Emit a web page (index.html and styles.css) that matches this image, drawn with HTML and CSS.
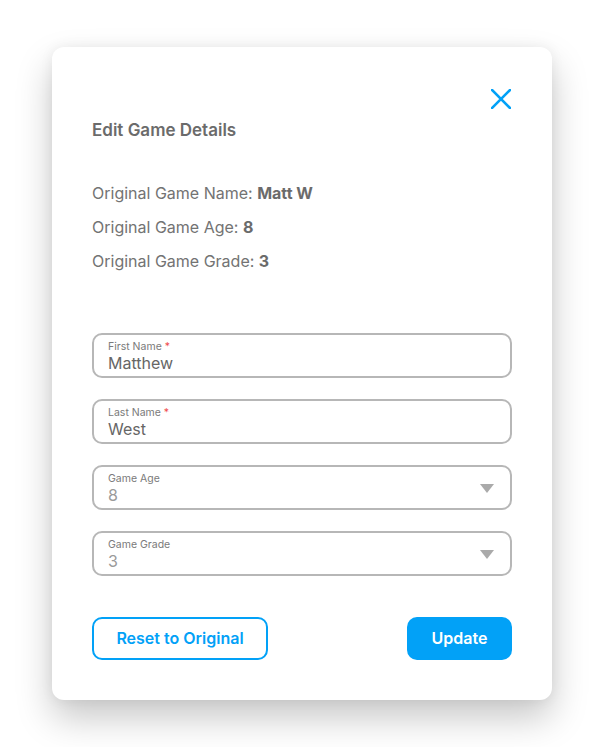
FILE: index.html
```html
<!DOCTYPE html>
<html lang="en">
<head>
<meta charset="utf-8">
<title>Edit Game Details</title>
<link rel="stylesheet" href="styles.css">
</head>
<body>
<div class="card">
  <div class="card-top">
    <button class="close" aria-label="Close">
      <svg width="20" height="20" viewBox="0 0 20 20"><path d="M1 1 L19 19 M19 1 L1 19" stroke="#02a1f7" stroke-width="2.6" stroke-linecap="square" fill="none"/></svg>
    </button>
  </div>
  <h2 class="title">Edit Game Details</h2>
  <div class="originals">
    <p>Original Game Name: <b>Matt W</b></p>
    <p>Original Game Age: <b>8</b></p>
    <p>Original Game Grade: <b>3</b></p>
  </div>
  <div class="fields">
    <div class="field">
      <span class="label">First Name <span class="req">*</span></span>
      <span class="value">Matthew</span>
    </div>
    <div class="field">
      <span class="label">Last Name <span class="req">*</span></span>
      <span class="value">West</span>
    </div>
    <div class="field select">
      <span class="label">Game Age</span>
      <span class="value muted">8</span>
      <span class="caret"></span>
    </div>
    <div class="field select">
      <span class="label">Game Grade</span>
      <span class="value muted">3</span>
      <span class="caret"></span>
    </div>
  </div>
  <div class="actions">
    <button class="btn btn-outline">Reset to Original</button>
    <button class="btn btn-solid">Update</button>
  </div>
</div>
</body>
</html>
```
FILE: styles.css
```css
* { box-sizing: border-box; }
html, body { margin: 0; padding: 0; background: #fff; }
body {
  font-family: Inter, "Noto Sans", "Liberation Sans", sans-serif;
  color: #6b6b6b;
  padding: 47px 52px;
}
.card {
  width: 500px;
  height: 653px;
  background: #fff;
  border-radius: 12px;
  box-shadow: 0 18px 36px rgba(0, 0, 0, 0.22), 0 0 14px rgba(0, 0, 0, 0.06);
  padding: 42px 40px 40px;
  display: flex;
  flex-direction: column;
}
.card-top {
  display: flex;
  justify-content: flex-end;
}
.close {
  width: 20px;
  height: 20px;
  padding: 0;
  border: 0;
  background: none;
  display: block;
  margin-right: 1px;
}
.close svg { display: block; }
.title {
  margin: 11px 0 0;
  font-size: 17px;
  line-height: 20px;
  font-weight: 600;
  color: #6b6b6b;
}
.originals {
  margin-top: 43px;
  display: flex;
  flex-direction: column;
  gap: 14px;
}
.originals p {
  margin: 0;
  font-size: 16px;
  line-height: 20px;
  color: #737373;
}
.originals b { font-weight: 700; color: #6b6b6b; }
.fields {
  margin-top: 62px;
  display: flex;
  flex-direction: column;
  gap: 21px;
}
.field {
  position: relative;
  height: 45px;
  border: 2px solid #b7b7b7;
  border-radius: 10px;
  padding: 6px 14px 4px;
  display: flex;
  flex-direction: column;
  justify-content: center;
  gap: 1px;
}
.label {
  font-size: 10.5px;
  line-height: 13px;
  color: #7a7a7a;
}
.req { color: #ef4b4b; }
.value {
  font-size: 16px;
  line-height: 19px;
  color: #666;
}
.value.muted { color: #9a9a9a; }
.caret {
  position: absolute;
  right: 16px;
  top: 17px;
  width: 0;
  height: 0;
  border-left: 7px solid transparent;
  border-right: 7px solid transparent;
  border-top: 9px solid #aaaaaa;
}
.actions {
  margin-top: 41px;
  display: flex;
  justify-content: space-between;
}
.btn {
  height: 43px;
  border-radius: 10px;
  font-family: inherit;
  font-size: 16px;
  font-weight: 600;
  padding: 0 0 1px;
}
.btn-outline {
  width: 176px;
  border: 2px solid #02a1f7;
  background: #fff;
  color: #02a1f7;
}
.btn-solid {
  width: 105px;
  border: 0;
  background: #02a1f7;
  color: #fff;
}
```
